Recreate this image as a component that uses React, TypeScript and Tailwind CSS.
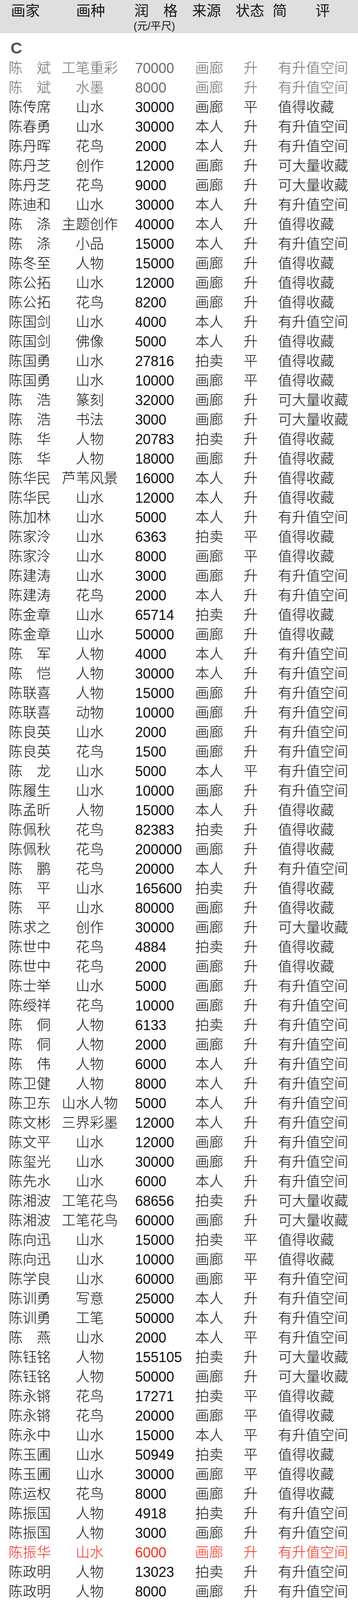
const rows = `陈斌|工笔重彩|70000|画廊|升|有升值空间|g
陈斌|水墨|8000|画廊|升|有升值空间|g
陈传席|山水|30000|画廊|平|值得收藏
陈春勇|山水|30000|本人|升|有升值空间
陈丹晖|花鸟|2000|本人|升|有升值空间
陈丹芝|创作|12000|画廊|升|可大量收藏
陈丹芝|花鸟|9000|画廊|升|可大量收藏
陈迪和|山水|30000|本人|升|有升值空间
陈涤|主题创作|40000|本人|升|值得收藏
陈涤|小品|15000|本人|升|有升值空间
陈冬至|人物|15000|画廊|升|值得收藏
陈公拓|山水|12000|画廊|升|值得收藏
陈公拓|花鸟|8200|画廊|升|值得收藏
陈国剑|山水|4000|本人|升|有升值空间
陈国剑|佛像|5000|本人|升|值得收藏
陈国勇|山水|27816|拍卖|平|值得收藏
陈国勇|山水|10000|画廊|平|值得收藏
陈浩|篆刻|32000|画廊|升|可大量收藏
陈浩|书法|3000|画廊|升|可大量收藏
陈华|人物|20783|拍卖|升|值得收藏
陈华|人物|18000|画廊|升|值得收藏
陈华民|芦苇风景|16000|本人|升|值得收藏
陈华民|山水|12000|本人|升|值得收藏
陈加林|山水|5000|本人|升|有升值空间
陈家泠|山水|6363|拍卖|平|值得收藏
陈家泠|山水|8000|画廊|平|值得收藏
陈建涛|山水|3000|画廊|升|有升值空间
陈建涛|花鸟|2000|本人|升|有升值空间
陈金章|山水|65714|拍卖|升|值得收藏
陈金章|山水|50000|画廊|升|值得收藏
陈军|人物|4000|本人|升|有升值空间
陈恺|人物|30000|本人|升|有升值空间
陈联喜|人物|15000|画廊|升|有升值空间
陈联喜|动物|10000|画廊|升|有升值空间
陈良英|山水|2000|画廊|升|有升值空间
陈良英|花鸟|1500|画廊|升|有升值空间
陈龙|山水|5000|本人|平|有升值空间
陈履生|山水|10000|画廊|升|有升值空间
陈孟昕|人物|15000|本人|升|值得收藏
陈佩秋|花鸟|82383|拍卖|升|值得收藏
陈佩秋|花鸟|200000|画廊|升|值得收藏
陈鹏|花鸟|20000|本人|升|有升值空间
陈平|山水|165600|拍卖|升|值得收藏
陈平|山水|80000|画廊|升|值得收藏
陈求之|创作|30000|画廊|升|可大量收藏
陈世中|花鸟|4884|拍卖|升|值得收藏
陈世中|花鸟|2000|画廊|升|值得收藏
陈士举|山水|5000|画廊|升|有升值空间
陈绶祥|花鸟|10000|画廊|升|有升值空间
陈侗|人物|6133|拍卖|升|有升值空间
陈侗|人物|2000|画廊|升|有升值空间
陈伟|人物|6000|本人|升|有升值空间
陈卫健|人物|8000|本人|升|有升值空间
陈卫东|山水人物|5000|本人|升|有升值空间
陈文彬|三界彩墨|12000|本人|升|有升值空间
陈文平|山水|12000|画廊|升|有升值空间
陈玺光|山水|30000|画廊|升|有升值空间
陈先水|山水|6000|本人|升|有升值空间
陈湘波|工笔花鸟|68656|拍卖|升|可大量收藏
陈湘波|工笔花鸟|60000|画廊|升|可大量收藏
陈向迅|山水|15000|拍卖|平|值得收藏
陈向迅|山水|10000|画廊|平|值得收藏
陈学良|山水|60000|画廊|平|有升值空间
陈训勇|写意|25000|本人|升|有升值空间
陈训勇|工笔|50000|本人|升|有升值空间
陈燕|山水|2000|本人|平|有升值空间
陈钰铭|人物|155105|拍卖|升|可大量收藏
陈钰铭|人物|50000|画廊|升|可大量收藏
陈永锵|花鸟|17271|拍卖|平|值得收藏
陈永锵|花鸟|20000|画廊|平|值得收藏
陈永中|山水|15000|本人|平|有升值空间
陈玉圃|山水|50949|拍卖|平|值得收藏
陈玉圃|山水|30000|画廊|平|值得收藏
陈运权|花鸟|8000|画廊|升|值得收藏
陈振国|人物|4918|拍卖|升|有升值空间
陈振国|人物|3000|画廊|升|有升值空间
陈振华|山水|6000|画廊|升|有升值空间|r
陈政明|人物|13023|拍卖|升|有升值空间
陈政明|人物|8000|画廊|升|有升值空间
陈滞冬|山水|40000|画廊|升|值得收藏
陈子|人物|10000|画廊|升|值得收藏
陈祖煌|山水|8000|本人|升|有升值空间
陈醉|人物|8000|本人|升|有升值空间`
	.split("\n")
	.map((line) => line.split("|"));

function Row({ cells }: { cells: string[] }) {
	const [name, kind, price, source, status, comment, tone] = cells;
	const color =
		tone === "g"
			? "text-[#6e6e6e]"
			: tone === "r"
				? "text-[#f5301c]"
				: "text-[#111111]";
	return (
		<div
			className={`flex h-[50px] shrink-0 items-center pl-[22px] font-light ${color}`}
		>
			<div className="flex w-[108px] justify-between">
				{name.split("").map((ch, i) => (
					<span key={i}>{ch}</span>
				))}
			</div>
			<div className="ml-[10px] w-[180px] text-center">{kind}</div>
			<div className="ml-[26px] w-[154px]">{price}</div>
			<div className="w-[124px]">{source}</div>
			<div className="w-[88px]">{status}</div>
			<div className="flex-1">{comment}</div>
		</div>
	);
}

export default function App() {
	return (
		<div
			className="flex h-[4292px] w-[917px] flex-col overflow-hidden bg-white text-[36px] leading-[50px]"
			style={{
				fontFamily:
					'"Liberation Sans", "Noto Sans CJK SC", "Noto Sans", sans-serif',
			}}
		>
			<div className="flex h-[85px] shrink-0 bg-[#dfdfdf] pl-[28px] pt-[8px] text-[37px] leading-[42px] text-[#1a1a1a]">
				<div className="w-[167px]">画家</div>
				<div className="w-[149px]">画种</div>
				<div className="flex w-[148px] flex-col">
					<span className="whitespace-pre">润　格</span>
					<span className="-ml-[2px] mt-[3px] whitespace-nowrap text-[27px] leading-[28px]">
						(元/平尺)
					</span>
				</div>
				<div className="w-[111px]">来源</div>
				<div className="w-[95px]">状态</div>
				<div className="w-[110px]">简</div>
				<div>评</div>
			</div>
			<div className="flex h-[65px] shrink-0 items-center pl-[27px] pt-[10px] text-[41px] font-bold text-[#555555]">
				C
			</div>
			{rows.map((cells, i) => (
				<Row key={i} cells={cells} />
			))}
		</div>
	);
}
